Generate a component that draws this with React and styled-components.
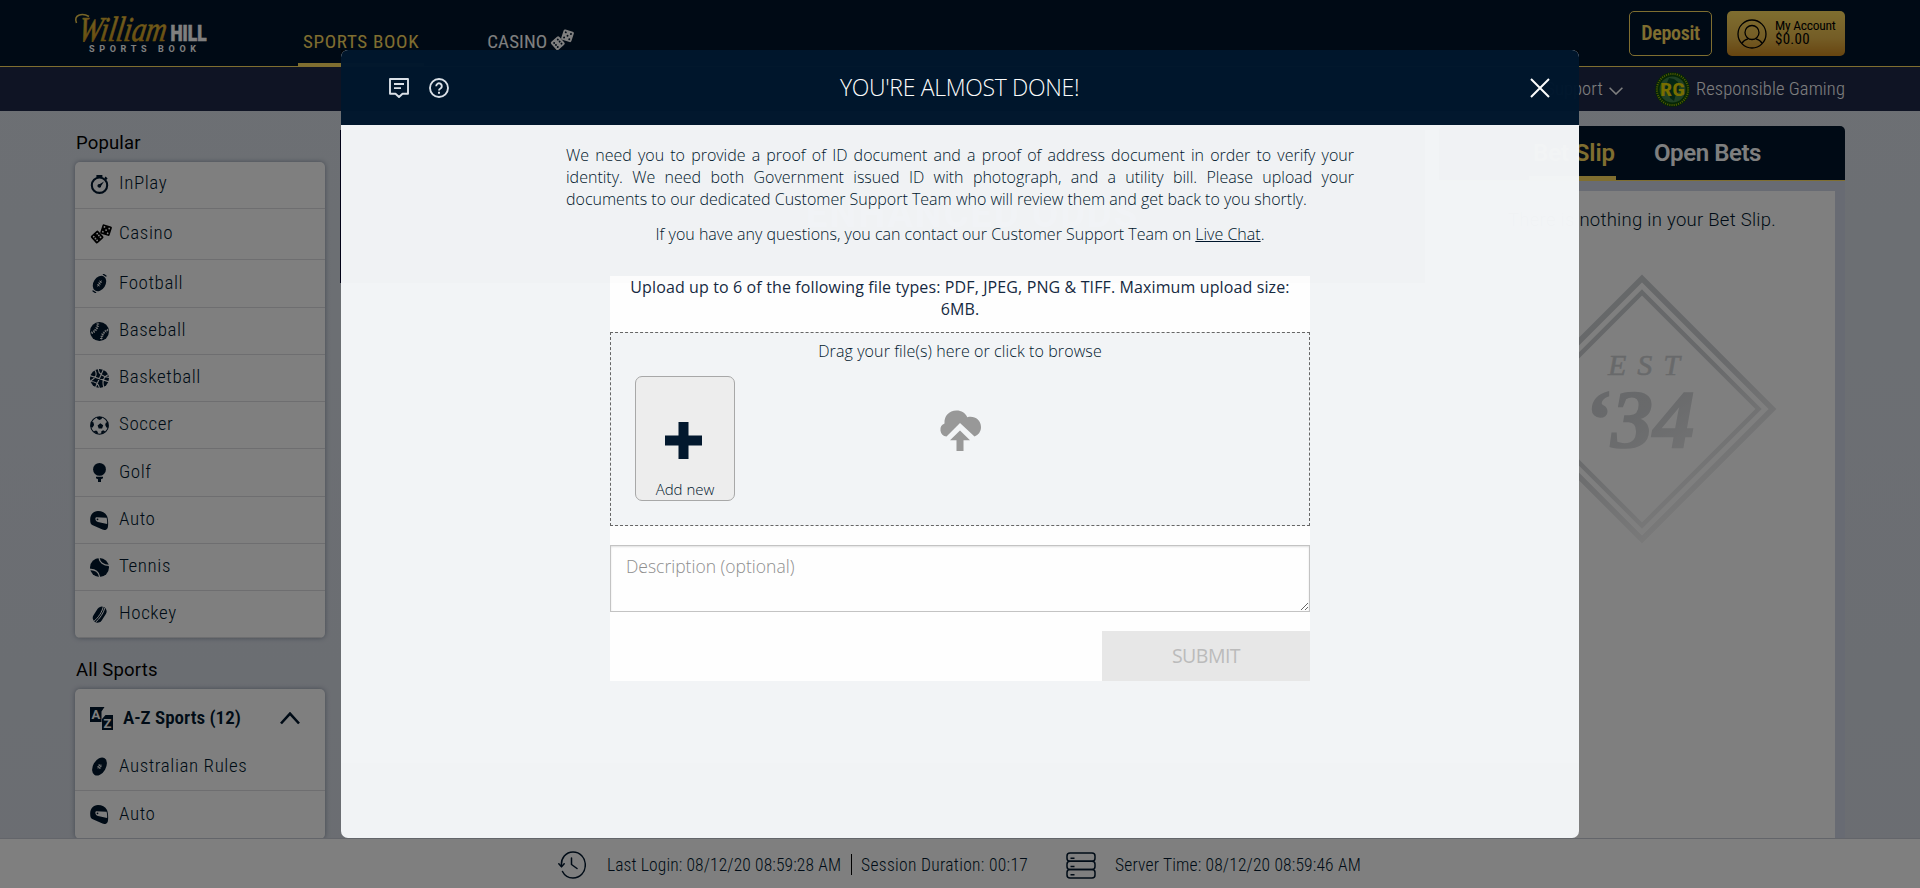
import React from "react";
import styled, { createGlobalStyle } from "styled-components";

const navy = "#00172d";
const gold = "#ffdc60";

const GlobalStyle = createGlobalStyle`
  *, *::before, *::after { box-sizing: border-box; }
  html, body { margin: 0; height: 100%; overflow: hidden; }
  body { font-family: Roboto, "Liberation Sans", sans-serif; color: ${navy}; }
  button { font: inherit; color: inherit; background: none; border: 0; padding: 0; cursor: pointer; }
`;

/* ---------- icons ---------- */

const Svg = styled.svg`
  display: block;
  flex: none;
  width: ${(p) => p.$w}px;
  height: ${(p) => p.$h || p.$w}px;
  fill: currentColor;
`;

const StopwatchIcon = () => (
  <Svg $w={19} viewBox="0 0 19 19">
    <circle cx="9.5" cy="10.2" r="7.7" fill="none" stroke="currentColor" strokeWidth="2.1" />
    <path d="M6.4 0h6v2.6h-6zM15.6 1.6l2 1.8-1.3 1.6-2-1.8zM14 6.4l-2.8 4.3a1.9 1.9 0 1 1-1.4-1.7z" />
  </Svg>
);

const DiceIcon = ({ w = 22, h = 20, pip = "#fff" }) => (
  <Svg $w={w} $h={h} viewBox="0 0 22 20">
    <g transform="rotate(-42 7 13)">
      <rect x="2.2" y="8.2" width="9.8" height="9.8" rx="1.4" />
      <g fill={pip}>
        <circle cx="4.8" cy="10.6" r=".9" /><circle cx="9.4" cy="10.6" r=".9" />
        <circle cx="4.8" cy="15.6" r=".9" /><circle cx="9.4" cy="15.6" r=".9" />
        <circle cx="4.8" cy="13.1" r=".9" /><circle cx="9.4" cy="13.1" r=".9" />
      </g>
    </g>
    <g transform="rotate(18 16 6)">
      <rect x="11.2" y="1.2" width="9.8" height="9.8" rx="1.4" />
      <g fill={pip}>
        <circle cx="13.6" cy="3.6" r=".9" /><circle cx="18.6" cy="3.6" r=".9" />
        <circle cx="13.6" cy="8.6" r=".9" /><circle cx="18.6" cy="8.6" r=".9" />
        <circle cx="16.1" cy="6.1" r=".9" />
      </g>
    </g>
  </Svg>
);

const FootballIcon = () => (
  <Svg $w={19} viewBox="0 0 19 19">
    <g transform="rotate(32 9.5 9.5)">
      <ellipse cx="9.5" cy="9.5" rx="6" ry="8.3" />
      <path d="M7.8 -1h3.4l.6 1.3H7.200zM7.200 18.700h4.600l-.6 1.300H7.800z" />
      <path d="M9.500 6v7M8 7.400h3M8 9.500h3M8 11.600h3" stroke="#fff" strokeWidth=".8" />
    </g>
  </Svg>
);

const RugbyIcon = () => (
  <Svg $w={19} viewBox="0 0 19 19">
    <g transform="rotate(30 9.5 9.5)">
      <ellipse cx="9.500" cy="9.500" rx="6.400" ry="9.800" />
      <path d="M8.800 7v5M10.300 7v5M7.600 8.600h3.900M7.600 10.500h3.900" stroke="#fff" strokeWidth=".7" />
    </g>
  </Svg>
);

const BaseballIcon = () => (
  <Svg $w={19} viewBox="0 0 19 19">
    <circle cx="9.500" cy="9.500" r="9.500" />
    <g fill="none" stroke="#fff">
      <path d="M7.800 1.500C7.800 6 5 9.800 1 11M18 8c-4 1.400-6.600 5-6.600 9.500" strokeWidth=".7" />
      <path d="M7.800 1.500C7.800 6 5 9.800 1 11M18 8c-4 1.400-6.600 5-6.600 9.500" strokeWidth="2.800" strokeDasharray=".8 1.400" />
    </g>
  </Svg>
);

const BasketballIcon = () => (
  <Svg $w={19} viewBox="0 0 19 19">
    <circle cx="9.500" cy="9.500" r="9.500" />
    <path
      d="M13.800-.5 5 19.500M-.5 6.500l20 6.500M4.600.5C7.500 5 6.500 9-.5 12.600M18.600 5.500c-5.600 2.500-7 6.500-4.600 13.500M8.500 0c-.5 4 4 8 11 8.500M0 12.500c6 0 9 3 9.500 7"
      fill="none" stroke="#fff" strokeWidth="1.1"
    />
  </Svg>
);

const SoccerIcon = () => (
  <Svg $w={19} viewBox="0 0 19 19">
    <circle cx="9.500" cy="9.500" r="8.800" fill="none" stroke="currentColor" strokeWidth="1.100" />
    <path d="M10.300 7.300l2.900 2-1.100 3.300H8.700L7.600 9.400zM6.500.9h6l-1 2.200-2 .8-2-.8zM.8 5.800l2.600.5.7 2.600-1.500 2.700L.5 11zM18.200 5.800l-2.400.9-.6 2.400 1.200 2.500 2.100.2zM3.600 15.300l2.600-.8 1.700 1.500-.4 2.300zM15.300 15.500l-2.200-1.200-1.900 1.300.2 2.600z" />
  </Svg>
);

const GolfIcon = () => (
  <Svg $w={19} viewBox="0 0 19 19">
    <circle cx="9.500" cy="6.400" r="6.400" />
    <path d="M6 13.800h7v1.400l-2 1.100V19H8v-2.700l-2-1.100z" />
  </Svg>
);

const HelmetIcon = () => (
  <Svg $w={19} viewBox="0 0 19 19">
    <path fillRule="evenodd" d="M8 0C3 .2 0 4 .2 9c0 2.500.5 4.200 2 5L12.500 18.600c1.800.8 4.500.4 5.300-2.200C18.500 13.500 18.200 8 17 5 15.300 1.500 12 0 8 0zM6.200 6.300 16.600 6.800c.5 2 .7 4 .5 6.300L8 10.900C5.500 10.200 4.500 7 6.200 6.300z" />
    <circle cx="7.500" cy="8.300" r=".9" />
  </Svg>
);

const TennisIcon = () => (
  <Svg $w={19} viewBox="0 0 19 19">
    <circle cx="9.500" cy="9.500" r="9.500" />
    <path d="M9-.5c.2 4.500 4.500 8 10.500 7.800M-.5 11.600c5.500-.6 9.800 2.500 10.200 8" fill="none" stroke="#fff" strokeWidth="1.300" />
  </Svg>
);

const PuckIcon = () => (
  <Svg $w={19} viewBox="0 0 19 19">
    <g transform="rotate(33 9.500 9.500)">
      <rect x="4.800" y=".8" width="9.800" height="17.400" rx="4.900" />
      <path d="M8 0c2.400 5 2.400 14 0 19M10.400 1c1.600 5 1.600 12 0 17" fill="none" stroke="#fff" strokeWidth=".9" />
    </g>
  </Svg>
);

const SvgText = styled.text`
  font-family: Roboto, sans-serif;
  font-weight: 700;
`;

const AzIcon = () => (
  <Svg $w={23} viewBox="0 0 23 23">
    <path d="M0 0h14.500L11.500 4.500V15H0zM12 12l3.500-4H23v15H12z" />
    <SvgText x="1.500" y="12" fontSize="13" fill="#fff">A</SvgText>
    <SvgText x="13.500" y="20.500" fontSize="13" fill="#fff">Z</SvgText>
  </Svg>
);

const ChevronIcon = ({ up, w, h, stroke }) => (
  <Svg $w={w} $h={h} viewBox={`0 0 ${w} ${h}`}>
    <path
      d={up ? `M1 ${h - 1.5}L${w / 2} 1.600 ${w - 1} ${h - 1.5}` : `M.6.8L${w / 2} ${h - 1} ${w - 0.6}.8`}
      fill="none" stroke="currentColor" strokeWidth={stroke}
    />
  </Svg>
);

const PersonIcon = () => (
  <Svg $w={30} viewBox="0 0 30 30">
    <g fill="none" stroke="currentColor" strokeWidth="1.300">
      <circle cx="15" cy="15" r="14" />
      <circle cx="15" cy="13.500" r="7" />
      <path d="M4.800 24.500c1.500-2.500 3.500-4 6.200-4.600M25.200 24.500c-1.500-2.500-3.500-4-6.200-4.600" />
    </g>
  </Svg>
);

const ResponsibleIcon = () => (
  <Svg $w={35} viewBox="0 0 35 35">
    <circle cx="17.500" cy="17.500" r="17.300" fill="#0a4a0a" />
    <circle cx="17.500" cy="17.500" r="15.600" fill="none" stroke="#a8b800" strokeWidth="2" strokeDasharray="1 1.250" pathLength="99" />
    <circle cx="17.500" cy="17.500" r="13" fill="#3f8048" />
    <path d="M14 6l5 1 4 3 2 9-4 3-2 7-4-3-1-6-4-4z" fill="#0a4a24" />
    <SvgText x="5" y="23.500" fontSize="18" fill="#f0dc00" textLength="25" lengthAdjust="spacingAndGlyphs">RG</SvgText>
  </Svg>
);

const HistoryIcon = () => (
  <Svg $w={28} viewBox="0 0 28 28">
    <g fill="none" stroke="currentColor" strokeWidth="1.500" strokeLinecap="round" strokeLinejoin="round">
      <path d="M3.500 15.500C2.500 7 8 1 15 1c7 0 12.300 5.500 12.300 13S22 27 15 27c-4.500 0-8.500-2.500-10.500-6.500" />
      <path d="M.8 12.800l2.700 3 2.700-3M13.500 7v6.500l5.500 4" />
    </g>
  </Svg>
);

const ServerIcon = () => (
  <Svg $w={30} $h={27} viewBox="0 0 30 27">
    <g fill="none" stroke="currentColor" strokeWidth="1.500">
      <rect x="1" y="1" width="28" height="8.300" rx="3" />
      <rect x="1" y="9.300" width="28" height="8.300" rx="3" />
      <rect x="1" y="17.600" width="28" height="8.300" rx="3" />
      <path d="M4.500 6.200h4M4.500 14.500h4M4.500 22.800h4" />
    </g>
  </Svg>
);

const ChatIcon = () => (
  <Svg $w={20} viewBox="0 0 20 20">
    <path d="M1 1h18v14.800h-5.500L10 19l-3.500-3.200H1z" fill="none" stroke="currentColor" strokeWidth="1.900" strokeLinejoin="round" />
    <path d="M5 5h10v1.900H5zM5 9.200h7v1.900H5z" />
  </Svg>
);

const HelpIcon = () => (
  <Svg $w={20} viewBox="0 0 20 20">
    <circle cx="10" cy="10" r="9" fill="none" stroke="currentColor" strokeWidth="1.900" />
    <path d="M7.200 8.200a2.800 2.800 0 1 1 4.300 2.300c-1 .6-1.500 1-1.500 2" fill="none" stroke="currentColor" strokeWidth="1.900" />
    <path d="M9 13.800h2v2H9z" />
  </Svg>
);

const CloseIcon = () => (
  <Svg $w={20} viewBox="0 0 20 20">
    <path d="M1 1l18 18M19 1L1 19" stroke="currentColor" strokeWidth="2" />
  </Svg>
);

const CloudUploadIcon = () => (
  <Svg $w={42} viewBox="0 0 42 42">
    <path d="M7.500 26.500A6.800 6.800 0 0 1 5.500 13.500C5 6 10 .5 17.500.5c5 0 9 2.600 10.800 6.800C35 5.500 42 9.500 42 17c0 4.500-2.500 8-6.500 9.500L21 13 7.500 26.500z" />
    <path d="M21 20.500l10 9.700h-6.500V41h-7V30.200H11z" />
  </Svg>
);

const PlusIcon = () => (
  <Svg $w={37} viewBox="0 0 37 37">
    <path d="M13.500 0h10v13.500H37v10H23.500V37h-10V23.500H0v-10h13.500z" />
  </Svg>
);

/* ---------- header ---------- */

const Page = styled.div`
  display: flex;
  flex-direction: column;
  height: 888px;
  background: linear-gradient(#dae0e8, #d6dbe4);
`;

const TopBar = styled.header`
  display: flex;
  height: 67px;
  flex: none;
  padding: 0 75px;
  background: #00142a;
  border-bottom: 1px solid ${gold};
`;

const LogoSvg = styled.svg`
  display: block;
  width: 140px;
  height: 50px;
  margin: 8px 83px 0 0;
  overflow: visible;
`;

const Script = styled.text`
  font-family: "Liberation Serif", serif;
  font-style: italic;
  font-weight: 400;
`;

const Block = styled.text`
  font-family: Roboto, sans-serif;
  font-weight: ${(p) => p.$weight};
`;

const Logo = () => (
  <LogoSvg viewBox="0 0 140 50">
    <defs>
      <linearGradient id="logoGold" x1="0" y1="0" x2="0" y2="1">
        <stop offset="0" stopColor="#f0cc50" />
        <stop offset="1" stopColor="#c89010" />
      </linearGradient>
    </defs>
    <g transform="translate(4.500 0) skewX(-9)">
      <Script x="3" y="33" fontSize="35" fill="url(#logoGold)" stroke="#d8a828" strokeWidth=".7" textLength="88" lengthAdjust="spacingAndGlyphs">William</Script>
    </g>
    <path d="M1.500 15C-2 7 7 4.500 14 8.500" fill="none" stroke="#f0cc50" strokeWidth="1.600" />
    <Block $weight={900} x="95.500" y="32.700" fontSize="22.500" fill="#fff" stroke="#fff" strokeWidth=".6" textLength="36" lengthAdjust="spacingAndGlyphs">HILL</Block>
    <Block $weight={700} x="14" y="43.800" fontSize="9" fill="#fff" textLength="107">SPORTS BOOK</Block>
  </LogoSvg>
);

const Tabs = styled.nav`
  display: flex;
  gap: 58px;
  flex: 1;
`;

const Tab = styled.a`
  display: flex;
  align-items: flex-start;
  gap: 3px;
  height: 67px;
  padding: 30px 5px 0;
  font-size: 19px;
  line-height: 24px;
  font-stretch: 75%;
  letter-spacing: ${(p) => p.$ls}px;
  color: ${(p) => (p.$active ? gold : "#fff")};
  border-bottom: 4px solid ${(p) => (p.$active ? gold : "transparent")};
`;

const TabIcon = styled.span`
  margin-top: -1px;
`;

const Actions = styled.div`
  display: flex;
  gap: 15px;
  padding-top: 11px;
`;

const DepositButton = styled.button`
  width: 83px;
  height: 45px;
  padding-bottom: 2px;
  border: 1px solid ${gold};
  border-radius: 5px;
  color: ${gold};
  font-size: 20px;
  font-weight: 600;
  font-stretch: 75%;
  letter-spacing: -.3px;
`;

const AccountButton = styled.button`
  display: flex;
  align-items: center;
  gap: 8px;
  width: 118px;
  height: 45px;
  padding: 0 0 0 10px;
  border-radius: 5px;
  background: linear-gradient(#ffdc60, #e8ba4c 60%, #d08a20);
  color: #000;
  text-align: left;
`;

const AccountText = styled.span`
  padding-bottom: 4px;
`;

const AccountLabel = styled.span`
  display: block;
  font-size: ${(p) => p.$size}px;
  line-height: 14px;
  font-stretch: 75%;
  letter-spacing: ${(p) => p.$ls}px;
  white-space: nowrap;
`;

const SubBar = styled.div`
  display: flex;
  justify-content: flex-end;
  align-items: center;
  height: 44px;
  flex: none;
  padding: 0 75px;
  background: #1e2848;
  color: #fff;
`;

const SubLink = styled.a`
  display: flex;
  align-items: center;
  gap: 6px;
  margin-left: 32px;
  font-size: 18.500px;
  font-weight: 300;
  font-stretch: 75%;
  letter-spacing: .1px;
  line-height: 22px;
`;

const DropMark = styled.span`
  padding-top: 4px;
`;

/* ---------- main columns ---------- */

const Main = styled.main`
  display: grid;
  grid-template-columns: 250px 1085px 406px;
  column-gap: 15px;
  flex: 1;
  min-height: 0;
  overflow: hidden;
  padding: 0 74px 0 75px;
`;

const Sidebar = styled.aside`
  min-width: 0;
`;

const SectionTitle = styled.h2`
  margin: 0;
  padding: ${(p) => p.$top}px 0 0 1px;
  height: ${(p) => p.$height}px;
  font-size: 18.500px;
  line-height: 22px;
  font-weight: 400;
  letter-spacing: .17px;
  color: #000;
`;

const Card = styled.section`
  background: #fff;
  border-radius: 5px;
  box-shadow: 0 0 5px rgba(60, 75, 100, .5);
  overflow: hidden;
`;

const SportRow = styled.a`
  display: flex;
  align-items: center;
  height: ${(p) => p.$h}px;
  padding: 0 15px ${(p) => p.$lift || 0}px;
  border-bottom: 1px solid #dcdde0;
`;

const SportIcon = styled.span`
  display: flex;
  width: 29px;
  color: ${(p) => (p.$black ? "#000" : navy)};
`;

const SportName = styled.span`
  padding-bottom: 2px;
  font-size: 19px;
  font-weight: 300;
  font-stretch: 75%;
  letter-spacing: .58px;
  line-height: 24px;
`;

const CardHeader = styled.div`
  display: flex;
  align-items: center;
  height: 56px;
  padding: 2px 25px 0 15px;
  gap: 10px;
`;

const CardTitle = styled.h3`
  flex: 1;
  margin: 0;
  padding-bottom: 2px;
  font-size: 19px;
  font-weight: 600;
  font-stretch: 75%;
`;

const Banner = styled.section`
  height: 153px;
  margin-top: 19px;
  padding: 64px 0 0 180px;
  text-align: center;
  font-size: 38px;
  font-weight: 700;
  line-height: 40px;
  letter-spacing: 2px;
  color: #aab;
  background: #04042c;
`;

const BetSlip = styled.aside`
  display: flex;
  flex-direction: column;
  margin-top: 15px;
  margin-left: -1px;
  width: 406px;
  background: #d0d6e6;
  border-radius: 5px 5px 0 0;
  overflow: hidden;
`;

const SlipTabs = styled.div`
  display: flex;
  gap: 34px;
  height: 55px;
  flex: none;
  padding-left: 90px;
  background: #00142a;
  border-bottom: 1px solid ${gold};
`;

const SlipTab = styled.a`
  height: 54px;
  padding: 13px 1px 0 4px;
  font-size: 24px;
  line-height: 28px;
  font-weight: 600;
  letter-spacing: ${(p) => p.$ls}px;
  color: ${(p) => (p.$active ? gold : "#fff")};
  border-bottom: 4px solid ${(p) => (p.$active ? gold : "transparent")};
`;

const SlipBody = styled.div`
  flex: 1;
  margin: 10px 10px 0;
  padding-top: 17px;
  background: #fff;
`;

const SlipMessage = styled.p`
  margin: 0 0 42px;
  text-align: center;
  font-size: 18.500px;
  line-height: 24px;
  font-weight: 300;
  letter-spacing: .27px;
`;

const Emblem = styled.svg`
  display: block;
  width: 270px;
  height: 270px;
  margin: 0 auto;
`;

const EmblemText = styled.text`
  font-family: "Liberation Serif", serif;
  font-style: italic;
  font-weight: ${(p) => p.$weight};
`;

const EstablishedEmblem = () => (
  <Emblem viewBox="0 0 270 270">
    <defs>
      <linearGradient id="fade" gradientUnits="userSpaceOnUse" x1="60" y1="60" x2="180" y2="255">
        <stop offset="0" stopColor="#cdd0d3" />
        <stop offset=".45" stopColor="#d2d4d7" />
        <stop offset="1" stopColor="#f6f6f6" />
      </linearGradient>
    </defs>
    <g fill="none" stroke="url(#fade)">
      <path d="M135 4.500L265.500 135 135 265.500 4.500 135z" strokeWidth="5.500" />
      <path d="M135 18.500L251.500 135 135 251.500 18.500 135z" strokeWidth="4.500" />
    </g>
    <g fill="url(#fade)" stroke="url(#fade)">
      <EmblemText $weight={400} x="101" y="101" fontSize="30" strokeWidth=".5" textLength="72">EST</EmblemText>
      <EmblemText $weight={700} x="76" y="173" fontSize="83" strokeWidth="1.500" textLength="112" lengthAdjust="spacingAndGlyphs">‘34</EmblemText>
    </g>
  </Emblem>
);

/* ---------- status bar ---------- */

const StatusBar = styled.footer`
  display: flex;
  align-items: center;
  height: 50px;
  flex: none;
  padding: 3px 0 0 558px;
  background: #fff;
  border-top: 1px solid #c6cbd4;
`;

const StatusText = styled.span`
  margin-left: ${(p) => p.$left}px;
  font-size: 17.500px;
  font-weight: 300;
  font-stretch: 75%;
  letter-spacing: ${(p) => p.$ls}px;
  line-height: 24px;
  white-space: nowrap;
`;

const StatusIcon = styled.span`
  margin-left: 38px;
`;

const StatusDivider = styled.span`
  width: 1px;
  height: 21px;
  margin: 0 9px 2px 10px;
  background: #000;
`;

/* ---------- modal ---------- */

const Overlay = styled.div`
  position: fixed;
  inset: 0;
  display: flex;
  align-items: flex-start;
  justify-content: center;
  padding-top: 50px;
  background: rgba(0, 0, 0, .5);
`;

const Dialog = styled.div`
  display: flex;
  flex-direction: column;
  width: 1238px;
  height: 788px;
  border-radius: 7px;
  overflow: hidden;
  background: #f3f5f7;
  opacity: .987;
  font-family: "Open Sans", "Liberation Sans", sans-serif;
`;

const DialogHeader = styled.div`
  display: grid;
  grid-template-columns: 1fr auto 1fr;
  align-items: center;
  height: 75px;
  flex: none;
  padding: 0 29px 0 48px;
  background: #00172d;
  color: #fff;
`;

const HeaderIcons = styled.div`
  display: flex;
  gap: 20px;
  color: #dde3ea;
`;

const DialogTitle = styled.h1`
  margin: 0 0 0 -20px;
  padding-bottom: 1px;
  font-size: 23px;
  line-height: 32px;
  font-weight: 300;
  letter-spacing: -.32px;
`;

const CloseButton = styled.button`
  justify-self: end;
`;

const DialogBody = styled.div`
  flex: 1;
  width: 788px;
  margin: 0 auto;
  padding-top: 19px;
`;

const Copy = styled.p`
  margin: 0 0 13px;
  font-size: 16px;
  line-height: 22px;
  font-weight: 300;
  text-align: ${(p) => p.$align};
  a { color: inherit; text-decoration: underline; }
`;

const UploadPanel = styled.section`
  width: 700px;
  height: 405px;
  margin: 31px auto 0;
  background: #fff;
`;

const UploadHint = styled.p`
  margin: 0;
  height: 56px;
  padding: 0 10px;
  font-size: 16px;
  line-height: 22px;
  letter-spacing: .12px;
  text-align: center;
  color: #15293f;
`;

const DropZone = styled.div`
  display: grid;
  grid-template-columns: 1fr auto 1fr;
  grid-template-rows: 36px auto;
  height: 194px;
  padding: 7px 24px 0;
  border: 1px dashed #666;
  background: #f3f5f7;
`;

const DropLabel = styled.div`
  grid-column: 1 / -1;
  text-align: center;
  font-size: 16px;
  line-height: 22px;
  font-weight: 300;
  letter-spacing: .1px;
`;

const AddTile = styled.button`
  display: flex;
  flex-direction: column;
  align-items: center;
  justify-content: flex-end;
  gap: 20px;
  width: 100px;
  height: 125px;
  padding-bottom: 1px;
  border: 1px solid #a8a8a8;
  border-radius: 7px;
  background: #eeeeee;
`;

const AddMark = styled.span`
  margin-right: 3px;
`;

const AddLabel = styled.span`
  font-size: 15px;
  line-height: 20px;
  font-weight: 300;
`;

const CloudSlot = styled.div`
  padding: 34px 1px 0 0;
  color: #989898;
`;

const Description = styled.textarea`
  display: block;
  width: 700px;
  height: 67px;
  margin: 19px 0;
  padding: 8px 15px;
  border: 1px solid #c4c4c4;
  box-shadow: inset 0 1px 2px rgba(0, 0, 0, .12);
  background: #fff;
  font: 300 17.500px/24px "Open Sans", "Liberation Sans", sans-serif;
  letter-spacing: 0;
  &::placeholder { color: #8e8e8e; opacity: 1; }
`;

const SubmitButton = styled.button`
  display: block;
  width: 208px;
  height: 50px;
  margin-left: auto;
  padding-bottom: 2px;
  background: #e8e8e8;
  color: #bcbcbc;
  font-size: 19.500px;
  letter-spacing: -.5px;
`;

const popular = [
  { name: "InPlay", icon: StopwatchIcon, h: 47, lift: 2 },
  { name: "Casino", icon: DiceIcon, h: 51, lift: 1, black: true },
  { name: "Football", icon: FootballIcon, h: 48 },
  { name: "Baseball", icon: BaseballIcon, h: 47 },
  { name: "Basketball", icon: BasketballIcon, h: 47 },
  { name: "Soccer", icon: SoccerIcon, h: 47 },
  { name: "Golf", icon: GolfIcon, h: 48 },
  { name: "Auto", icon: HelmetIcon, h: 47 },
  { name: "Tennis", icon: TennisIcon, h: 47 },
  { name: "Hockey", icon: PuckIcon, h: 47 },
];

const allSports = [
  { name: "Australian Rules", icon: RugbyIcon, h: 46, lift: 2 },
  { name: "Auto", icon: HelmetIcon, h: 48 },
];

const Sport = ({ name, icon: Icon, h, lift, black }) => (
  <SportRow $h={h} $lift={lift}>
    <SportIcon $black={black}><Icon /></SportIcon>
    <SportName>{name}</SportName>
  </SportRow>
);

export default function App() {
  return (
    <>
      <GlobalStyle />
      <Page>
        <TopBar>
          <Logo />
          <Tabs>
            <Tab $active $ls={0.69}>SPORTS BOOK</Tab>
            <Tab $ls={0.08}>
              CASINO
              <TabIcon><DiceIcon w={24} h={22} pip="#00142a" /></TabIcon>
            </Tab>
          </Tabs>
          <Actions>
            <DepositButton>Deposit</DepositButton>
            <AccountButton>
              <PersonIcon />
              <AccountText>
                <AccountLabel $size={13.5} $ls={-0.25}>My Account</AccountLabel>
                <AccountLabel $size={15} $ls={0.28}>$0.00</AccountLabel>
              </AccountText>
            </AccountButton>
          </Actions>
        </TopBar>
        <SubBar>
          <SubLink>
            Support
            <DropMark><ChevronIcon w={14} h={8} stroke={1.6} /></DropMark>
          </SubLink>
          <SubLink><ResponsibleIcon />Responsible Gaming</SubLink>
        </SubBar>
        <Main>
          <Sidebar>
            <SectionTitle $top={21} $height={51}>Popular</SectionTitle>
            <Card>{popular.map((s) => <Sport key={s.name} {...s} />)}</Card>
            <SectionTitle $top={21} $height={51}>All Sports</SectionTitle>
            <Card>
              <CardHeader>
                <AzIcon />
                <CardTitle>A-Z Sports (12)</CardTitle>
                <ChevronIcon up w={20} h={13} stroke={2.6} />
              </CardHeader>
              {allSports.map((s) => <Sport key={s.name} {...s} />)}
            </Card>
          </Sidebar>
          <Banner>ENHANCED ODDS</Banner>
          <BetSlip>
            <SlipTabs>
              <SlipTab $active $ls={-0.1}>Bet Slip</SlipTab>
              <SlipTab $ls={-0.43}>Open Bets</SlipTab>
            </SlipTabs>
            <SlipBody>
              <SlipMessage>There is nothing in your Bet Slip.</SlipMessage>
              <EstablishedEmblem />
            </SlipBody>
          </BetSlip>
        </Main>
        <StatusBar>
          <HistoryIcon />
          <StatusText $left={21} $ls={0.12}>Last Login: 08/12/20 08:59:28 AM</StatusText>
          <StatusDivider />
          <StatusText $left={0} $ls={0.31}>Session Duration: 00:17</StatusText>
          <StatusIcon><ServerIcon /></StatusIcon>
          <StatusText $left={19} $ls={0.16}>Server Time: 08/12/20 08:59:46 AM</StatusText>
        </StatusBar>
      </Page>
      <Overlay>
        <Dialog>
          <DialogHeader>
            <HeaderIcons><ChatIcon /><HelpIcon /></HeaderIcons>
            <DialogTitle>YOU'RE ALMOST DONE!</DialogTitle>
            <CloseButton><CloseIcon /></CloseButton>
          </DialogHeader>
          <DialogBody>
            <Copy $align="justify">
              We need you to provide a proof of ID document and a proof of address document in order to
              verify your identity. We need both Government issued ID with photograph, and a utility
              bill. Please upload your documents to our dedicated Customer Support Team who will review
              them and get back to you shortly.
            </Copy>
            <Copy $align="center">
              If you have any questions, you can contact our Customer Support Team on <a>Live Chat</a>.
            </Copy>
            <UploadPanel>
              <UploadHint>
                Upload up to 6 of the following file types: PDF, JPEG, PNG &amp; TIFF. Maximum upload size: 6MB.
              </UploadHint>
              <DropZone>
                <DropLabel>Drag your file(s) here or click to browse</DropLabel>
                <AddTile>
                  <AddMark><PlusIcon /></AddMark>
                  <AddLabel>Add new</AddLabel>
                </AddTile>
                <CloudSlot><CloudUploadIcon /></CloudSlot>
              </DropZone>
              <Description placeholder="Description (optional)" />
              <SubmitButton>SUBMIT</SubmitButton>
            </UploadPanel>
          </DialogBody>
        </Dialog>
      </Overlay>
    </>
  );
}
